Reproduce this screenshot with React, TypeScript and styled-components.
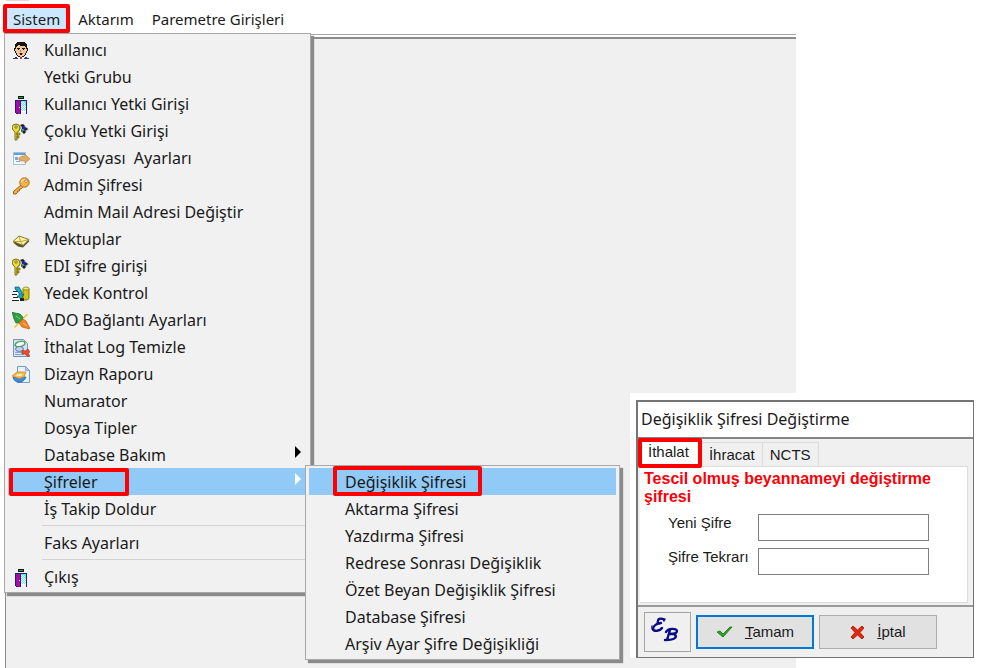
import React from "react";
import styled, { createGlobalStyle, css } from "styled-components";

const uiFont = `"Noto Sans", "Open Sans", sans-serif`;
const dialogFont = `"Liberation Sans", Arial, sans-serif`;

const GlobalStyle = createGlobalStyle`
  *, *::before, *::after { box-sizing: border-box; }
  body { margin: 0; background: #fff; color: #1a1a1a; font: 16px/27px ${uiFont}; }
  button, input { font: inherit; color: inherit; margin: 0; }
  ul { list-style: none; margin: 0; padding: 0; }
`;

const Page = styled.div`
  position: relative;
  display: flex;
  flex-direction: column;
  min-height: 100vh;
`;

/* Red frame that marks the element to click */
const marked = css<{ $marked?: boolean }>`
  ${(p) =>
    p.$marked &&
    css`
      &::after {
        content: "";
        position: absolute;
        inset: var(--mark-inset);
        border: 4px solid #fe0000;
        border-radius: 2px;
        pointer-events: none;
      }
    `}
`;

const MenuBar = styled.nav`
  display: flex;
  align-items: flex-end;
  gap: 3px;
  height: 33px;
  padding: 0 6px 1px;
  background: linear-gradient(#ffc9d0, #ffc9d0) 6px 0 / 23px 1px no-repeat;
  font-size: 15px;
  line-height: 25px;
`;

const MenuBarItem = styled.div`
  position: relative;
`;

const MenuBarButton = styled.button<{ $open?: boolean; $marked?: boolean }>`
  position: relative;
  display: block;
  height: 25px;
  padding: 0 8px 0 7px;
  border: 0;
  white-space: nowrap;
  background: ${(p) => (p.$open ? "#cce8ff" : "transparent")};
  --mark-inset: -3px -2px -1px -3px;
  ${marked}
`;

const Workspace = styled.main`
  display: grid;
  flex: 1;
  margin: 1px 192px 0 5px;
  border-top: 1px solid #a8a8a8;
  padding-top: 2px;
`;

const WorkspaceSurface = styled.div`
  border: solid #8c8c8c;
  border-width: 2px 0 0 1px;
  background: #f0f0f0;
`;

const Menu = styled.ul<{ $sub?: boolean }>`
  position: absolute;
  z-index: 2;
  top: ${(p) => (p.$sub ? "-3px" : "26px")};
  left: ${(p) => (p.$sub ? "297px" : "-2px")};
  width: ${(p) => (p.$sub ? "315px" : "307px")};
  padding: 2px 3px;
  border: 1px solid #a8a8a8;
  background: #f1f1f1;
  box-shadow: 3px 3px 1px #8a8a8a;
  font-size: 16px;
  line-height: 27px;
`;

const MenuRow = styled.li<{ $rule?: boolean }>`
  position: relative;
  ${(p) =>
    p.$rule &&
    css`
      height: 7px;
      padding: 3px 0 0 34px;
      &::before {
        content: "";
        display: block;
        height: 1px;
        background: #d4d4d4;
      }
    `}
`;

const MenuButton = styled.button<{ $active?: boolean; $marked?: boolean; $sub?: boolean }>`
  position: relative;
  display: flex;
  align-items: center;
  gap: 14px;
  width: 100%;
  height: 27px;
  padding: 2px 6px 0 4px;
  border: 0;
  text-align: left;
  white-space: pre;
  background: ${(p) => (p.$active ? "#91c9f7" : "transparent")};
  --mark-inset: ${(p) => (p.$sub ? "-2px 134px -1px 24px" : "0 178px -1px 1px")};
  ${marked}
`;

const IconSlot = styled.span`
  display: flex;
  flex: none;
  align-items: center;
  justify-content: center;
  width: 18px;
  height: 20px;
`;

const MenuLabel = styled.span`
  flex: 1;
`;

const Arrow = styled.svg`
  width: 6px;
  height: 12px;
  margin: 0 0 8px;
`;

const DialogBackdrop = styled.div`
  position: absolute;
  z-index: 3;
  top: 393px;
  left: 630px;
  padding: 7px 14px 0 6px;
  background: #fff;
`;

const Dialog = styled.section`
  width: 338px;
  border: solid #757575;
  border-width: 2px 1px 1px 2px;
  background: #f0f0f0;
  font: 15px/18px ${dialogFont};
`;

const DialogTitle = styled.h1`
  margin: 0;
  padding: 0 3px;
  border-bottom: 2px solid #858585;
  background: #fff;
  font: 400 16px/35px ${uiFont};
`;

const DialogBody = styled.div`
  padding: 0 5px 2px 2px;
`;

const Tabs = styled.div`
  display: flex;
  align-items: flex-end;
  height: 27px;
`;

const Tab = styled.button<{ $active?: boolean; $marked?: boolean }>`
  position: relative;
  height: ${(p) => (p.$active ? "27px" : "24px")};
  padding: ${(p) => (p.$active ? "0 12px 3px 8px" : "0 7px")};
  border: 1px solid #dcdcdc;
  border-width: 1px 1px 0 0;
  background: ${(p) => (p.$active ? "#fff" : "#f0f0f0")};
  --mark-inset: -2px -1px -2px -2px;
  ${marked}
`;

const TabPanel = styled.form`
  padding: 3px 5px 27px 4px;
  border: 1px solid #dcdcdc;
  border-left: 0;
  background: #fff;
`;

const Warning = styled.p`
  margin: 0 0 8px;
  color: #fb0007;
  font-size: 16px;
  font-weight: 700;
`;

const Field = styled.div`
  display: grid;
  grid-template-columns: 90px 171px;
  padding-left: 24px;
  & + & {
    margin-top: 7px;
  }
`;

const FieldLabel = styled.label`
  white-space: nowrap;
`;

const FieldInput = styled.input`
  width: 100%;
  height: 27px;
  padding: 2px 5px;
  border: 1px solid #7f7f7f;
  background: #fff;
`;

const DialogFooter = styled.footer`
  display: flex;
  align-items: center;
  gap: 5px;
  padding: 5px 6px;
  border-top: 2px solid #9a9a9a;
`;

const LogoBox = styled.div`
  display: grid;
  place-items: center;
  width: 47px;
  height: 40px;
  padding: 0 6px 6px 0;
  border: 1px solid #a5a5a5;
`;

const ActionButton = styled.button<{ $primary?: boolean }>`
  display: flex;
  align-items: center;
  justify-content: center;
  gap: 12px;
  width: 118px;
  height: 34px;
  padding: 0;
  border: ${(p) => (p.$primary ? "2px solid #0078d7" : "1px solid #adadad")};
  background: #e1e1e1;
`;

const palette: Record<string, string> = {
  K: "#161616",
  F: "#f3c79e",
  D: "#b98258",
  W: "#ffffff",
  R: "#d42040",
  B: "#33406e",
  G: "#12a33a",
  N: "#23206e",
  P: "#a60aa8",
  C: "#62e6f0",
};

const faceMap = [
  "....KKKKKKKK....",
  "...KKKKKKKKKK...",
  "..KKKKKKKKKKKK..",
  "..KKKFFKKKKKKK..",
  "..KKFFFFFFFFKK..",
  "..KFFFFFFFFFFK..",
  ".KKFKKKFFKKKFKK.",
  ".KFFFKFFFFKFFFK.",
  ".KFFFFFDFFFFFFK.",
  "..KFFFFDFFFFFK..",
  "..KFFFFFFFFFFK..",
  "...KFFDKKDFFK...",
  "...KFFFKKFFFK...",
  "....KFFFFFFK....",
  ".....KKFFKK.....",
  "..BBWWWRRWWWBB..",
  "BBBBBWWRRWWBBBBB",
];

const doorMap = [
  "...KKKKKK...",
  "...KGGGGK...",
  "...KKKKKK...",
  "............",
  "NNNNNNNNNNNN",
  "NPPPPNCCCCCN",
  "NPPPPNWCWCCN",
  "NPPPPNCWCWCN",
  "NPPPPNWCWCCN",
  "NPPPPNCWCWCN",
  "NPPPPNWCWCWN",
  "NPPPWNCWCWCN",
  "NPPPPNWCWCWN",
  "NPPPPNCWCWCN",
  "NPPPPNWCWCWN",
  "NPPPPNWWWWWN",
  "NPPPPN.....N",
  ".NNPPN.....N",
];

function PixelIcon({ map }: { map: string[] }) {
  const width = map[0].length;
  return (
    <svg width={width} height={map.length} viewBox={`0 0 ${width} ${map.length}`} shapeRendering="crispEdges" aria-hidden>
      {map.flatMap((row, y) =>
        [...row].map((c, x) => (c === "." ? null : <rect key={`${x}-${y}`} x={x} y={y} width="1" height="1" fill={palette[c]} />)),
      )}
    </svg>
  );
}

const svgProps = { width: 18, height: 18, viewBox: "0 0 18 18", "aria-hidden": true } as const;

const KeysIcon = () => (
  <svg {...svgProps}>
    <path d="M8 3l3-2 6 5-3 3-2 2-4-5z" fill="#bdbdbd" />
    <path d="M8 2l3-1 2 2-2 2zM13 4l3 2-3 2-1-2zM12 7l2 2-2 2-2-2z" fill="#222" />
    <path d="M10 3l3 1v3l-3-1z" fill="#1c25c4" />
    <path d="M9 6l2 1v2H9z" fill="#15933e" />
    <path d="M1 2l3-1 3 1 1 3-1 3-2 1v8H3V9L1 7 0 4z" fill="#f0dc32" stroke="#5c5600" strokeWidth=".8" />
    <path d="M5 10h3v2H5zM5 13h2v2H5z" fill="#c7b217" stroke="#5c5600" strokeWidth=".6" />
    <path d="M3 3h2v2H3z" fill="#fff" stroke="#3d3900" strokeWidth=".6" />
  </svg>
);

const IniIcon = () => (
  <svg {...svgProps}>
    <path d="M1.500 2.500h12v12h-12z" fill="#f2f8fe" stroke="#a9bfd6" />
    <path d="M2 3h11v2H2z" fill="#5d9de0" />
    <path d="M3 7h3v3H3zM4 11h4v1H4z" fill="#78a7de" />
    <path d="M7 8l3-2h3V4l5 5-5 4v-2H9l-2-1z" fill="#e2ab62" stroke="#c08b4b" strokeWidth=".7" />
  </svg>
);

const KeyIcon = () => (
  <svg {...svgProps}>
    <path d="M9.500 7.500l-8 7v2.500h2.500l1.500-1.500V14h2v-2h1.500l2-2" fill="#f2b13c" stroke="#a46216" />
    <circle cx="12.500" cy="5.500" r="4.700" fill="#f5b544" stroke="#b06c19" />
    <path d="M9.500 5c.4-2 2-3 4-2.600" fill="none" stroke="#ffe3a1" strokeWidth="1.300" />
    <circle cx="14" cy="4.200" r="1.300" fill="#fff" stroke="#a46216" strokeWidth=".7" />
  </svg>
);

const LetterIcon = () => (
  <svg {...svgProps}>
    <path d="M1 11.500l5 4 5 1 6-6v-2z" fill="#55522c" />
    <path d="M1 10.500L7 5l10 3.500-6 6z" fill="#fff3a0" stroke="#5f591f" strokeWidth=".8" />
    <path d="M7 5l1.500 5.500L17 8.500M1 10.500l7.500 0 2.500 4" fill="none" stroke="#a39135" strokeWidth=".8" />
  </svg>
);

const BackupIcon = () => (
  <svg {...svgProps}>
    <path d="M1 7h6v9H1z" fill="#fff" />
    <path d="M1 6h5v1H1zM0 9h5v1H0zM1 12h5v1H1zM0 15h7v1H0z" fill="#222" />
    <path d="M11 3.500h6v10l-2 1.500h-4z" fill="#d2c414" stroke="#625b06" strokeWidth=".8" />
    <ellipse cx="14" cy="3.500" rx="3" ry="1.500" fill="#f7ee66" stroke="#625b06" strokeWidth=".6" />
    <path d="M3 2h4l3 5v3l2-1-3 5-4-3h2V8L3 4z" fill="#19a9c1" stroke="#0c5664" strokeWidth=".7" />
    <path d="M8 13h4v3H8z" fill="#222" />
  </svg>
);

const PlugIcon = () => (
  <svg {...svgProps}>
    <path d="M15.500 2L11 6.500M2.500 15.500L6 12" stroke="#f0c928" strokeWidth="1.500" />
    <path d="M0 0l3 1 5 1 3 3-1 3-3 3-3 0-2-4z" fill="#2f9d42" stroke="#1d6d2d" strokeWidth=".7" />
    <path d="M7 11l4-4 3 2 2 4 2 3-1 1-3-1-4-1z" fill="#f5821f" stroke="#c25a0d" strokeWidth=".7" />
    <path d="M4 4l4 3" stroke="#7cd07b" />
    <path d="M11 11l4 3" stroke="#ffc078" />
  </svg>
);

const LogIcon = () => (
  <svg {...svgProps}>
    <path d="M1.500 .5h10l4 4v13h-14z" fill="#d5e3f5" stroke="#7893b8" />
    <path d="M3 13h7v1H3zM3 15h9v1H3z" fill="#8fa9cb" />
    <ellipse cx="8" cy="5" rx="5" ry="2.500" transform="rotate(-15 8 5)" fill="#fff" stroke="#43a451" strokeWidth="1.400" />
    <ellipse cx="7.500" cy="10" rx="4" ry="2.500" fill="#bcd3ee" stroke="#66799a" />
    <path d="M10 11l3 1 3-2 2 3-2 1 2 3-2 1-3-3-3 0z" fill="#e2512d" stroke="#a63116" strokeWidth=".6" />
  </svg>
);

const DesignIcon = () => (
  <svg {...svgProps}>
    <path d="M5.500 .5h8l4 4v12h-12z" fill="#e9f3fd" stroke="#6f9bcd" />
    <path d="M13.500 .5v4h4z" fill="#a9cbee" stroke="#6f9bcd" strokeWidth=".7" />
    <path d="M1 11c1 7 11 7 13 0z" fill="#3e8ad6" stroke="#2563a8" strokeWidth=".7" />
    <path d="M0 10l5-4h9l-2 5-5 1.500z" fill="#f4bd4e" stroke="#bd822a" strokeWidth=".7" />
    <path d="M5 8h6l-2 2H4z" fill="#ffe9b0" />
  </svg>
);

const EbLogo = () => (
  <svg width="28" height="25" viewBox="0 0 28 25" fill="none" stroke="#0b0b86" strokeLinecap="round" strokeLinejoin="round" aria-label="EB">
    <path d="M13 3C12 1 7 1 7 4C6 6 8 7 10 6C6 6 2 9 2 12C3 15 9 14 11 11" strokeWidth="2.400" />
    <path d="M10 2H14L13 4M1 9V12" strokeWidth="1.400" />
    <path d="M19 13L16 23M15 15C17 11 26 11 26 14C26 17 21 17 19 17C24 16 26 19 24 21C22 23 17 23 14 23" strokeWidth="2.400" />
    <path d="M19 17H23" strokeWidth="1.400" />
  </svg>
);

const CheckIcon = () => (
  <svg width="17" height="12" viewBox="0 0 17 12" aria-hidden>
    <path d="M1 6l3-1 3 3 7-7 2 0-9 10z" fill="#2ba51f" stroke="#187112" strokeWidth=".8" />
  </svg>
);

const CrossIcon = () => (
  <svg width="15" height="15" viewBox="0 0 15 15" aria-hidden>
    <path d="M1 3l2-2 4.500 4L12 1l2 2-4 4.500 4 4.500-2 2-4.500-4L3 14l-2-2 4-4.500z" fill="#e7260b" stroke="#9b1705" strokeWidth=".8" />
  </svg>
);

type Entry = { label: string; icon?: React.ReactNode; sub?: boolean; open?: boolean } | "rule";

const face = <PixelIcon map={faceMap} />;
const door = <PixelIcon map={doorMap} />;

const systemEntries: Entry[] = [
  { label: "Kullanıcı", icon: face },
  { label: "Yetki Grubu" },
  { label: "Kullanıcı Yetki Girişi", icon: door },
  { label: "Çoklu Yetki Girişi", icon: <KeysIcon /> },
  { label: "Ini Dosyası  Ayarları", icon: <IniIcon /> },
  { label: "Admin Şifresi", icon: <KeyIcon /> },
  { label: "Admin Mail Adresi Değiştir" },
  { label: "Mektuplar", icon: <LetterIcon /> },
  { label: "EDI şifre girişi", icon: <KeysIcon /> },
  { label: "Yedek Kontrol", icon: <BackupIcon /> },
  { label: "ADO Bağlantı Ayarları", icon: <PlugIcon /> },
  { label: "İthalat Log Temizle", icon: <LogIcon /> },
  { label: "Dizayn Raporu", icon: <DesignIcon /> },
  { label: "Numarator" },
  { label: "Dosya Tipler" },
  { label: "Database Bakım", sub: true },
  { label: "Şifreler", sub: true, open: true },
  { label: "İş Takip Doldur" },
  "rule",
  { label: "Faks Ayarları" },
  "rule",
  { label: "Çıkış", icon: door },
];

const passwordEntries = [
  "Değişiklik Şifresi",
  "Aktarma Şifresi",
  "Yazdırma Şifresi",
  "Redrese Sonrası Değişiklik",
  "Özet Beyan Değişiklik Şifresi",
  "Database Şifresi",
  "Arşiv Ayar Şifre Değişikliği",
];

function PasswordMenu() {
  return (
    <Menu $sub>
      {passwordEntries.map((label, i) => (
        <MenuRow key={label}>
          <MenuButton $sub $active={i === 0} $marked={i === 0}>
            <IconSlot />
            <MenuLabel>{label}</MenuLabel>
          </MenuButton>
        </MenuRow>
      ))}
    </Menu>
  );
}

function SystemMenu() {
  return (
    <Menu>
      {systemEntries.map((entry, i) =>
        entry === "rule" ? (
          <MenuRow key={i} $rule role="separator" />
        ) : (
          <MenuRow key={i}>
            <MenuButton $active={entry.open} $marked={entry.open}>
              <IconSlot>{entry.icon}</IconSlot>
              <MenuLabel>{entry.label}</MenuLabel>
              {entry.sub && (
                <Arrow viewBox="0 0 6 12" aria-hidden>
                  <path d="M0 0l6 6-6 6z" fill={entry.open ? "#fff" : "#000"} />
                </Arrow>
              )}
            </MenuButton>
            {entry.open && <PasswordMenu />}
          </MenuRow>
        ),
      )}
    </Menu>
  );
}

function PasswordDialog() {
  return (
    <DialogBackdrop>
      <Dialog role="dialog" aria-labelledby="dialog-title">
        <DialogTitle id="dialog-title">Değişiklik Şifresi Değiştirme</DialogTitle>
        <DialogBody>
          <Tabs role="tablist">
            <Tab role="tab" aria-selected $active $marked>İthalat</Tab>
            <Tab role="tab">İhracat</Tab>
            <Tab role="tab">NCTS</Tab>
          </Tabs>
          <TabPanel id="password-form">
            <Warning>Tescil olmuş beyannameyi değiştirme şifresi</Warning>
            <Field>
              <FieldLabel htmlFor="new-password">Yeni Şifre</FieldLabel>
              <FieldInput id="new-password" type="password" />
            </Field>
            <Field>
              <FieldLabel htmlFor="repeat-password">Şifre Tekrarı</FieldLabel>
              <FieldInput id="repeat-password" type="password" />
            </Field>
          </TabPanel>
        </DialogBody>
        <DialogFooter>
          <LogoBox><EbLogo /></LogoBox>
          <ActionButton $primary>
            <CheckIcon />
            <span><u>T</u>amam</span>
          </ActionButton>
          <ActionButton>
            <CrossIcon />
            <span><u>İ</u>ptal</span>
          </ActionButton>
        </DialogFooter>
      </Dialog>
    </DialogBackdrop>
  );
}

export default function App() {
  return (
    <Page>
      <GlobalStyle />
      <MenuBar>
        <MenuBarItem>
          <MenuBarButton $open $marked>Sistem</MenuBarButton>
          <SystemMenu />
        </MenuBarItem>
        <MenuBarItem><MenuBarButton>Aktarım</MenuBarButton></MenuBarItem>
        <MenuBarItem><MenuBarButton>Paremetre Girişleri</MenuBarButton></MenuBarItem>
      </MenuBar>
      <Workspace>
        <WorkspaceSurface />
      </Workspace>
      <PasswordDialog />
    </Page>
  );
}
